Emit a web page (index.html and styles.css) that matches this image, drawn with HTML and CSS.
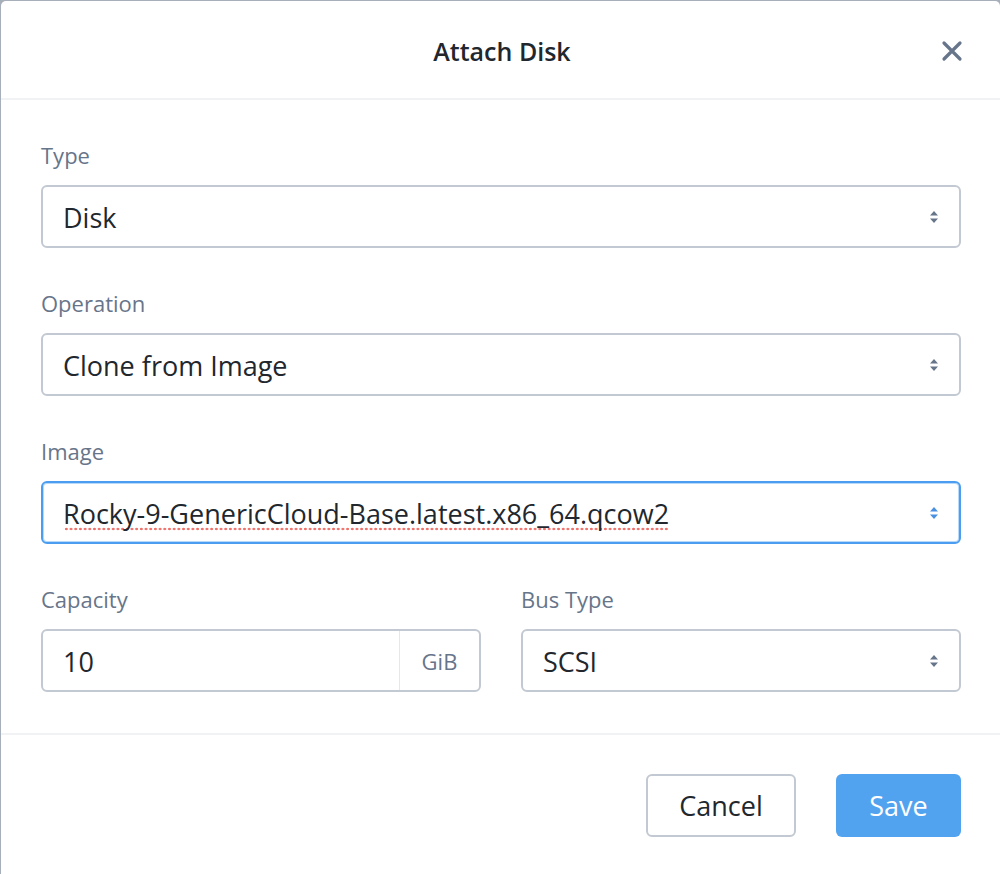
FILE: index.html
```html
<!DOCTYPE html>
<html lang="en">
<head>
<meta charset="utf-8">
<title>Attach Disk</title>
<link rel="stylesheet" href="styles.css">
</head>
<body>
<div class="modal">
  <header class="modal-header">
    <span></span>
    <h1 class="modal-title">Attach Disk</h1>
    <button class="close" aria-label="Close">
      <svg width="22" height="22" viewBox="0 0 22 22"><path d="M3 3 L19 19 M19 3 L3 19" stroke="#67758a" stroke-width="3.2" stroke-linecap="round" fill="none"/></svg>
    </button>
  </header>
  <div class="modal-body">
    <div class="field">
      <label class="label">Type</label>
      <div class="select"><span class="value">Disk</span><svg class="caret" width="10" height="14" viewBox="0 0 10 14"><path d="M5 1 L9 5.5 H1 Z M5 13 L9 8.5 H1 Z" fill="currentColor"/></svg></div>
    </div>
    <div class="field">
      <label class="label">Operation</label>
      <div class="select"><span class="value">Clone from Image</span><svg class="caret" width="10" height="14" viewBox="0 0 10 14"><path d="M5 1 L9 5.5 H1 Z M5 13 L9 8.5 H1 Z" fill="currentColor"/></svg></div>
    </div>
    <div class="field">
      <label class="label">Image</label>
      <div class="select focused"><span class="value"><span class="spell">Rocky-9-GenericCloud-Base.latest.x86_64.qcow2</span></span><svg class="caret" width="10" height="14" viewBox="0 0 10 14"><path d="M5 1 L9 5.5 H1 Z M5 13 L9 8.5 H1 Z" fill="currentColor"/></svg></div>
    </div>
    <div class="row">
      <div class="field">
        <label class="label">Capacity</label>
        <div class="input-group"><span class="value">10</span><span class="addon">GiB</span></div>
      </div>
      <div class="field">
        <label class="label">Bus Type</label>
        <div class="select"><span class="value">SCSI</span><svg class="caret" width="10" height="14" viewBox="0 0 10 14"><path d="M5 1 L9 5.5 H1 Z M5 13 L9 8.5 H1 Z" fill="currentColor"/></svg></div>
      </div>
    </div>
  </div>
  <footer class="modal-footer">
    <button class="btn btn-default">Cancel</button>
    <button class="btn btn-primary">Save</button>
  </footer>
</div>
</body>
</html>
```

FILE: styles.css
```css
* { box-sizing: border-box; }
html, body { margin: 0; padding: 0; }
body {
  background: #a7afba;
  font-family: "Open Sans", Lato, sans-serif;
  color: #22272e;
  overflow: hidden;
  height: 874px;
}
.modal {
  margin: 1px 0 0 1px;
  width: 999px;
  height: 873px;
  background: #fff;
  border-radius: 5px 5px 0 0;
}
.modal-header {
  height: 99px;
  border-bottom: 2px solid #f1f2f4;
  display: grid;
  grid-template-columns: 1fr auto 1fr;
  align-items: center;
  padding: 2px 37px 0 40px;
}
.modal-title {
  margin: 0;
  font-size: 25px;
  line-height: 32px;
  font-weight: 600;
  color: #22272e;
}
.close {
  justify-self: end;
  background: none;
  border: 0;
  padding: 0;
  width: 22px;
  height: 22px;
  display: flex;
  cursor: pointer;
}
.modal-body {
  padding: 43px 39px 41px 40px;
  border-bottom: 2px solid #f1f2f4;
}
.field { margin-bottom: 43px; }
.modal-body > .row .field,
.modal-body > .field:last-child { margin-bottom: 0; }
.label {
  display: block;
  height: 24px;
  line-height: 24px;
  font-size: 22px;
  color: #67758a;
  margin-bottom: 18px;
}
.select, .input-group {
  height: 63px;
  border: 2px solid #c3c9d2;
  border-radius: 6px;
  display: flex;
  align-items: center;
  background: #fff;
}
.select { padding: 0 20px 0 20px; color: #67758a; }
.value {
  flex: 1;
  font-size: 27px;
  line-height: 34px;
  padding-top: 2px;
  color: #22272e;
  white-space: nowrap;
}
.caret { flex: none; }
.select.focused {
  border-color: #4a9df0;
  box-shadow: inset 0 0 0 1px #b9d9f8;
  color: #4a90e2;
}
.spell {
  display: inline-block;
  line-height: 30px;
  padding-bottom: 2px;
  background-image: radial-gradient(circle at center, #ef6f68 0, #ef6f68 1px, rgba(239,111,104,0) 1.6px);
  background-size: 4.7px 4px;
  background-repeat: repeat-x;
  background-position: 1px 100%;
}
.row {
  display: grid;
  grid-template-columns: 1fr 1fr;
  column-gap: 40px;
}
.input-group { padding-left: 20px; }
.addon {
  align-self: stretch;
  width: 80px;
  border-left: 1px solid #e4e7eb;
  display: flex;
  align-items: center;
  justify-content: center;
  font-size: 22px;
  color: #67758a;
}
.modal-footer {
  display: flex;
  justify-content: flex-end;
  gap: 40px;
  padding: 39px 39px 0 0;
}
.btn {
  height: 63px;
  border-radius: 6px;
  font-family: inherit;
  font-size: 27px;
  padding: 0;
  cursor: pointer;
}
.btn-default {
  width: 150px;
  background: #fff;
  border: 2px solid #c3c9d2;
  color: #22272e;
}
.btn-primary {
  width: 125px;
  background: #52a3ef;
  border: 0;
  color: #fff;
}
```
